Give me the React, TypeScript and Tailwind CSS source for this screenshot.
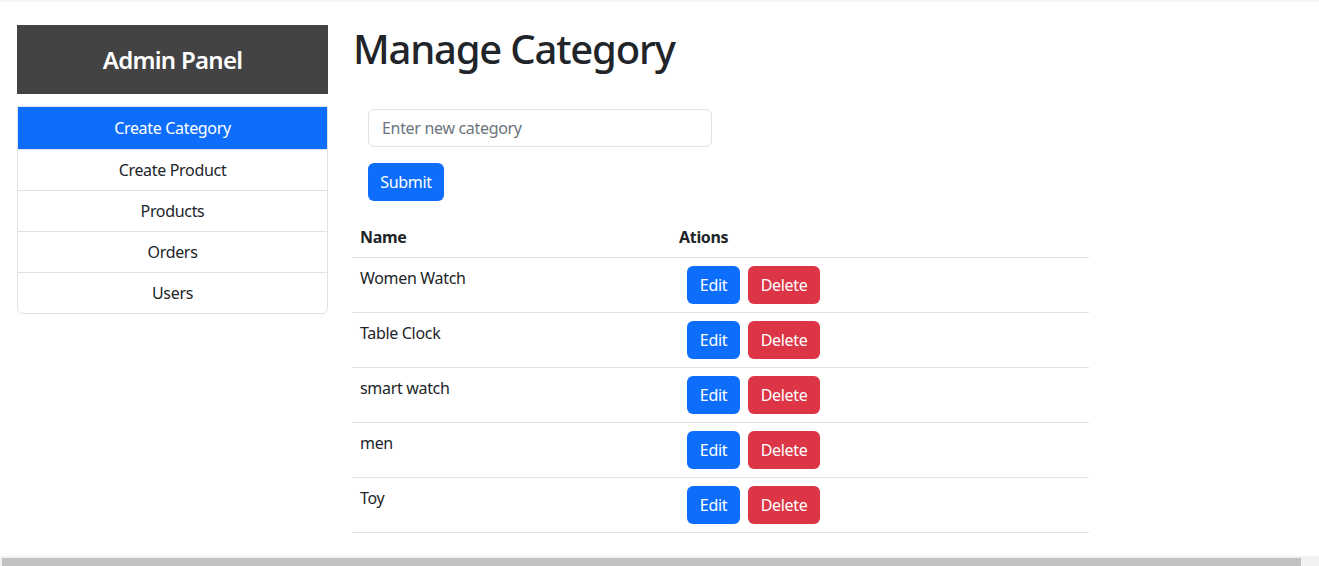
import React from "react"

const menu = ["Create Category", "Create Product", "Products", "Orders", "Users"]
const categories = ["Women Watch", "Table Clock", "smart watch", "men", "Toy"]

export default function App() {
  return (
    <div
      className="flex h-[566px] w-full flex-col overflow-hidden bg-white tracking-[-0.02em] text-[#212529]"
      style={{ fontFamily: '"Segoe UI", "Noto Sans", sans-serif' }}
    >
      <div className="h-[2px] w-full bg-[#f5f5f5]"></div>
      <div className="flex flex-1 pt-[23px]">
        {/* sidebar */}
        <div className="ml-[17px] w-[311px] shrink-0">
          <div className="flex h-[69px] items-center justify-center bg-[#434343]">
            <h4 className="text-[24px] font-semibold tracking-[-0.03em] text-white">Admin Panel</h4>
          </div>
          <div className="mt-[12px] flex flex-col overflow-hidden rounded-b-md border border-[#dee2e6] text-[16px]">
            {menu.map((item, i) => (
              <div
                key={item}
                className={
                  i === 0
                    ? "-mx-px -mt-px flex h-[43px] items-center justify-center bg-[#0d6efd] text-white"
                    : "flex h-[41px] items-center justify-center border-t border-[#dee2e6]"
                }
              >
                {item}
              </div>
            ))}
          </div>
        </div>

        {/* main */}
        <div className="ml-[25px] flex flex-col">
          <h1 className="text-[40px] leading-[1.2] font-medium tracking-[-0.03em]">Manage Category</h1>
          <div className="ml-[15px] mt-[36px] flex flex-col">
            <input
              className="h-[38px] w-[344px] rounded-md border border-[#dee2e6] px-[13px] text-[16px] outline-none placeholder:text-[#6c757d]"
              placeholder="Enter new category"
            />
            <button className="mt-[16px] h-[38px] w-[76px] rounded-md bg-[#0d6efd] text-[16px] text-white">
              Submit
            </button>
          </div>
          <table className="mt-[16px] -ml-px w-[737px] border-collapse text-[16px]">
            <thead>
              <tr className="border-b border-[#dee2e6]">
                <th className="w-[319px] px-[8px] py-[8px] text-left font-bold">Name</th>
                <th className="px-[8px] py-[8px] text-left font-bold">Ations</th>
              </tr>
            </thead>
            <tbody>
              {categories.map((c) => (
                <tr key={c} className="h-[55px] border-b border-[#dee2e6] align-top">
                  <td className="px-[8px] pt-[8px]">{c}</td>
                  <td className="px-[8px] pt-[8px]">
                    <div className="flex gap-[8px] pl-[8px]">
                      <button className="h-[38px] w-[53px] rounded-md bg-[#0d6efd] text-white">Edit</button>
                      <button className="h-[38px] w-[72px] rounded-md bg-[#dc3545] text-white">Delete</button>
                    </div>
                  </td>
                </tr>
              ))}
            </tbody>
          </table>
        </div>
      </div>
      <div className="flex h-[10px] w-full bg-[#f1f1f1] pt-[2px]">
        <div className="ml-[2px] h-full w-[1299px] bg-[#c1c1c1]"></div>
      </div>
    </div>
  )
}
